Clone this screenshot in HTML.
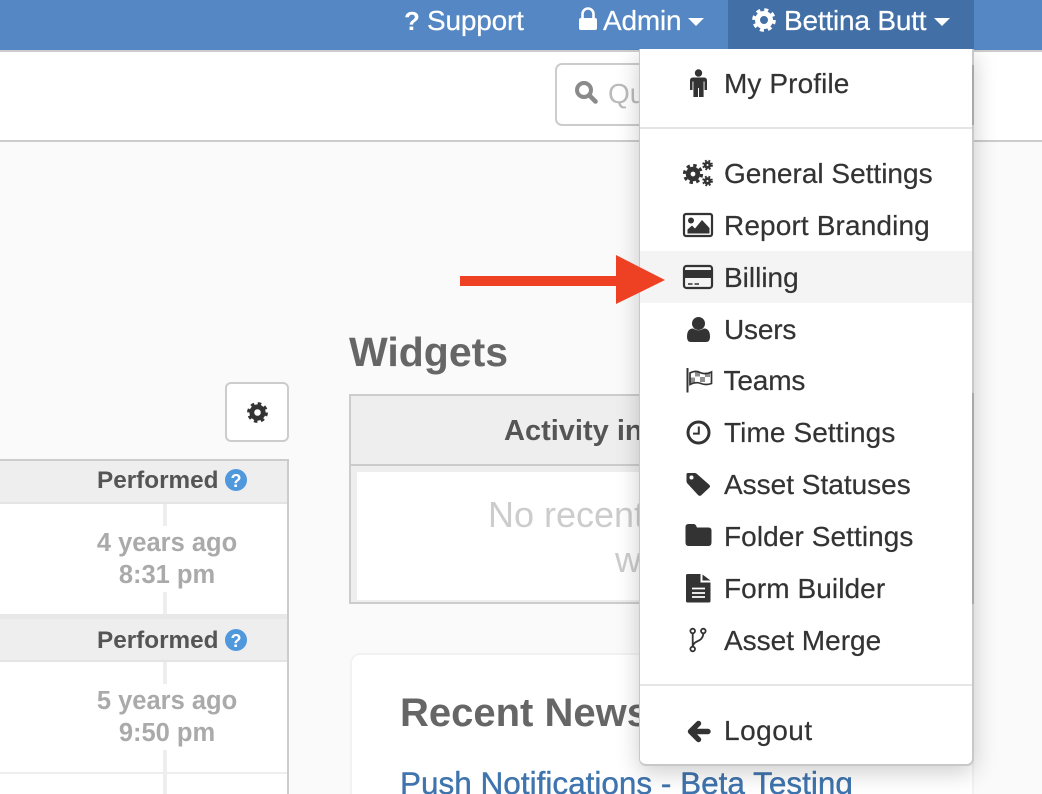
<!DOCTYPE html>
<html><head><meta charset="utf-8"><title>Billing</title>
<style>
html,body{margin:0;padding:0;width:1042px;height:794px;overflow:hidden;background:#fafafa;font-family:"Liberation Sans",sans-serif;}
#w{position:absolute;left:0;top:0;width:1042px;height:794px;overflow:hidden;background:#fafafa;}
.a{position:absolute;white-space:nowrap;}
.b{position:absolute;}
svg{position:absolute;overflow:visible;}
.m{position:absolute;left:724px;font-size:28px;line-height:32px;color:#333;white-space:nowrap;-webkit-text-stroke:.2px #333;}
.n{position:absolute;color:#fff;font-size:28px;line-height:32px;white-space:nowrap;letter-spacing:-.2px;-webkit-text-stroke:.2px #fff;}
.p{position:absolute;font-weight:bold;font-size:24.3px;line-height:30px;color:#555;white-space:nowrap;}
.t{position:absolute;width:200px;left:67px;text-align:center;font-weight:bold;font-size:25.5px;line-height:32px;color:#aaa;white-space:nowrap;}
</style></head><body><div id="w">
<div class="b" style="left:0;top:52px;width:1042px;height:88px;background:#fff"></div>
<div class="b" style="left:0;top:140px;width:1042px;height:2px;background:#ccc"></div>
<div class="b" style="left:0;top:0;width:1042px;height:50px;background:#5487c3"></div>
<div class="b" style="left:0;top:50px;width:1042px;height:2px;background:#ccc"></div>
<div class="b" style="left:728px;top:0;width:246px;height:50px;background:#4270a6"></div>

<span class="n" style="left:427px;top:5px">Support</span>
<span class="a" style="left:404px;top:5px;color:#fff;font-size:26px;font-weight:bold;line-height:32px">?</span>
<svg style="left:578px;top:8px" width="20" height="22" viewBox="0 0 20 22"><path d="M4.500 10V6a5.500 5.500 0 0 1 11 0v4" fill="none" stroke="#fff" stroke-width="2.600"/><rect x="1" y="10" width="18" height="12" rx="2" fill="#fff"/></svg>
<span class="n" style="left:603px;top:5px">Admin</span>
<svg style="left:688px;top:18px" width="16" height="9"><path d="M0 0H16L8 8Z" fill="#fff"/></svg>
<svg style="left:752px;top:8px" width="24" height="24" viewBox="0 0 24 24"><circle cx="12" cy="12" r="6.500" fill="none" stroke="#fff" stroke-width="5"/><circle cx="12" cy="12" r="10.200" fill="none" stroke="#fff" stroke-width="3.200" stroke-dasharray="4 4"/></svg>
<span class="n" style="left:784px;top:5px">Bettina Butt</span>
<svg style="left:934px;top:18px" width="16" height="9"><path d="M0 0H16L8 8Z" fill="#fff"/></svg>

<div class="b" style="left:555px;top:63px;width:415px;height:59px;background:#fff;border:2px solid #ccc;border-radius:7px"></div>
<svg style="left:574px;top:80px" width="24" height="24" viewBox="0 0 24 24"><circle cx="10" cy="10" r="7" fill="none" stroke="#8a8a8a" stroke-width="4"/><path d="M15.500 15.500L21.500 21.500" stroke="#8a8a8a" stroke-width="4.600" stroke-linecap="round"/></svg>
<span class="a" style="left:608px;top:78px;font-size:28px;line-height:32px;color:#bbb">Quick</span>

<div class="b" style="left:225px;top:382px;width:60px;height:56px;background:#fff;border:2px solid #ccc;border-radius:6px"></div>
<svg style="left:247px;top:402px" width="21" height="21" viewBox="0 0 24 24"><circle cx="12" cy="12" r="6.500" fill="none" stroke="#333" stroke-width="5.500"/><circle cx="12" cy="12" r="10.200" fill="none" stroke="#333" stroke-width="3.400" stroke-dasharray="4 4"/></svg>

<div class="b" style="left:-4px;top:459px;width:289px;height:340px;background:#fff;border:2px solid #ccc;border-bottom:0"></div>
<div class="b" style="left:0;top:461px;width:287px;height:41px;background:#eee"></div>
<div class="b" style="left:0;top:502px;width:287px;height:2px;background:#e4e4e4"></div>
<div class="b" style="left:163px;top:504px;width:4px;height:22px;background:#eee"></div>
<div class="b" style="left:163px;top:592px;width:4px;height:22px;background:#eee"></div>
<div class="b" style="left:0;top:614px;width:287px;height:5px;background:#e8e8e8"></div>
<div class="b" style="left:0;top:619px;width:287px;height:41px;background:#eee"></div>
<div class="b" style="left:0;top:660px;width:287px;height:2px;background:#e4e4e4"></div>
<div class="b" style="left:163px;top:662px;width:4px;height:22px;background:#eee"></div>
<div class="b" style="left:163px;top:750px;width:4px;height:44px;background:#eee"></div>
<div class="b" style="left:0;top:772px;width:287px;height:2px;background:#eee"></div>
<span class="p" style="left:97px;top:466px">Performed</span>
<span class="p" style="left:97px;top:626px">Performed</span>
<svg style="left:225px;top:469px" width="22" height="22"><circle cx="11" cy="11" r="11" fill="#4f98dc"/><text x="11" y="18" font-family="Liberation Sans" font-weight="bold" font-size="18" fill="#fff" text-anchor="middle">?</text></svg>
<svg style="left:225px;top:629px" width="22" height="22"><circle cx="11" cy="11" r="11" fill="#4f98dc"/><text x="11" y="18" font-family="Liberation Sans" font-weight="bold" font-size="18" fill="#fff" text-anchor="middle">?</text></svg>
<div class="t" style="top:527px">4 years ago</div>
<div class="t" style="top:559px">8:31 pm</div>
<div class="t" style="top:685px">5 years ago</div>
<div class="t" style="top:717px">9:50 pm</div>

<span class="a" style="left:349px;top:329px;font-size:41px;line-height:46px;font-weight:bold;color:#666">Widgets</span>
<div class="b" style="left:349px;top:394px;width:621px;height:206px;background:#eee;border:2px solid #ccc"></div>
<div class="b" style="left:351px;top:464px;width:621px;height:2px;background:#ccc"></div>
<div class="b" style="left:357px;top:472px;width:615px;height:128px;background:#fff"></div>
<span class="a" style="left:504px;top:415px;font-size:29px;line-height:32px;font-weight:bold;color:#555">Activity in</span>
<span class="a" style="left:488px;top:495px;font-size:36px;line-height:40px;color:#ccc">No recent</span>
<span class="a" style="left:615px;top:540px;font-size:36px;line-height:40px;color:#ccc">w</span>

<div class="b" style="left:350px;top:653px;width:620px;height:160px;background:#fff;border:2px solid #f2f2f2;border-radius:10px"></div>
<span class="a" style="left:400px;top:690px;font-size:40px;line-height:46px;font-weight:bold;color:#666">Recent News</span>
<span class="a" style="left:400px;top:767px;font-size:31.500px;line-height:32px;color:#3f74ad;-webkit-text-stroke:.4px #3f74ad">Push Notifications - Beta Testing</span>

<div class="b" style="left:639px;top:49px;width:332px;height:715px;background:#fff;border:1px solid #c8c8c8;border-right-width:2px;border-top:0;border-bottom-width:2px;border-radius:0 0 7px 7px;box-shadow:0 6px 24px rgba(0,0,0,.2);clip-path:inset(0 -40px -40px -40px)"></div>
<div class="b" style="left:972px;top:393px;width:2px;height:211px;background:#a8a8a8"></div>
<div class="b" style="left:972px;top:65px;width:2px;height:60px;background:#a8a8a8"></div>
<div class="b" style="left:640px;top:127px;width:332px;height:2px;background:#e5e5e5"></div>
<div class="b" style="left:640px;top:684px;width:332px;height:2px;background:#e5e5e5"></div>
<div class="b" style="left:640px;top:251px;width:332px;height:52px;background:#f4f4f4"></div>

<span class="m" style="top:68px;letter-spacing:.1px">My Profile</span>
<span class="m" style="top:158px">General Settings</span>
<span class="m" style="top:210px;letter-spacing:.13px">Report Branding</span>
<span class="m" style="top:262px">Billing</span>
<span class="m" style="top:314px;letter-spacing:-.2px">Users</span>
<span class="m" style="top:365px;left:723.500px;letter-spacing:-.15px">Teams</span>
<span class="m" style="top:417px;letter-spacing:.1px">Time Settings</span>
<span class="m" style="top:469px">Asset Statuses</span>
<span class="m" style="top:521px;letter-spacing:.08px">Folder Settings</span>
<span class="m" style="top:573px;letter-spacing:.08px">Form Builder</span>
<span class="m" style="top:625px">Asset Merge</span>
<span class="m" style="top:715px;letter-spacing:.5px">Logout</span>

<svg style="left:690px;top:69px" width="17" height="28" viewBox="0 0 17 28"><circle cx="8.500" cy="4" r="3.700" fill="#333"/><path d="M3 8.500H14Q17 8.500 17 11.500V21H14.500V12.500H13.600V28H9V19H8V28H3.400V12.500H2.500V21H0V11.500Q0 8.500 3 8.500Z" fill="#333"/></svg>

<svg style="left:683px;top:159px" width="30" height="28" viewBox="0 0 30 28"><g fill="none" stroke="#333"><circle cx="10" cy="15" r="4.800" stroke-width="4.800"/><circle cx="10" cy="15" r="8.600" stroke-width="3" stroke-dasharray="3.400 3.350"/><circle cx="24.500" cy="6" r="2.400" stroke-width="2.800"/><circle cx="24.500" cy="6" r="4.400" stroke-width="1.900" stroke-dasharray="1.800 1.800"/><circle cx="24.500" cy="22" r="2.400" stroke-width="2.800"/><circle cx="24.500" cy="22" r="4.400" stroke-width="1.900" stroke-dasharray="1.800 1.800"/></g></svg>

<svg style="left:683px;top:213px" width="30" height="24" viewBox="0 0 30 24"><rect x="1" y="1" width="28" height="22" rx="2" fill="none" stroke="#333" stroke-width="2.200"/><circle cx="8" cy="7.500" r="3" fill="#333"/><path d="M4.500 20.500V16.500L9 12.500L12 15.500L19 7L26.500 15V20.500Z" fill="#333"/></svg>

<svg style="left:683px;top:265px" width="30" height="24" viewBox="0 0 30 24"><rect x="1" y="1" width="28" height="22" rx="2.500" fill="none" stroke="#333" stroke-width="2.200"/><rect x="1" y="5" width="28" height="8" fill="#333"/><path d="M5 19H9.500M11.500 19H16" stroke="#333" stroke-width="1.600"/></svg>

<svg style="left:687px;top:317px" width="23" height="25" viewBox="0 0 23 25"><circle cx="11.500" cy="6.500" r="6.500" fill="#333"/><path d="M0 20Q0 11.500 6 11.500Q11.500 15 17 11.500Q23 11.500 23 20Q23 25 19 25H4Q0 25 0 20Z" fill="#333"/></svg>

<svg style="left:686px;top:368px" width="27" height="25" viewBox="0 0 27 25"><path d="M1.500 0V24.500" stroke="#333" stroke-width="2"/><path d="M4 5Q9 2 14 4.500T25.500 4V15.500Q20 17.500 15 15.500T4 16.500Z" fill="none" stroke="#333" stroke-width="1.700"/><path d="M9 4H14V8.500H9ZM19 4.500H24V9H19ZM14 9H19V14H14ZM4.500 9.500H9V15H4.500Z" fill="#333" opacity=".55"/></svg>

<svg style="left:686px;top:420px" width="25" height="25" viewBox="0 0 25 25"><circle cx="12.500" cy="12.500" r="10.500" fill="none" stroke="#333" stroke-width="3"/><path d="M12.800 6.500V13.600H7" fill="none" stroke="#333" stroke-width="2"/></svg>

<svg style="left:686px;top:472px" width="25" height="25" viewBox="0 0 25 25"><path d="M0.500 2.500Q0.500 1 2 1H9Q10 1 11 2L23.500 13Q24.500 14.500 23.500 15.500L15 23.500Q13.500 24.500 12 23L1 11Q0.500 10 0.500 9Z" fill="#333"/><circle cx="5.500" cy="5.500" r="2" fill="#fff"/></svg>

<svg style="left:685px;top:524px" width="27" height="22" viewBox="0 0 26 22"><path d="M0 3Q0 0 3 0H8Q10 0 11 2.500L11.500 3.500H23Q26 3.500 26 6.500V18.500Q26 22 23 22H3Q0 22 0 18.500Z" fill="#333"/></svg>

<svg style="left:686px;top:574px" width="25" height="29" viewBox="0 0 25 29"><path d="M1.500 0H14.500V8.500H24.500V27Q24.500 28.500 23 28.500H1.500Q0 28.500 0 27V1.500Q0 0 1.500 0Z" fill="#333"/><path d="M16.500 0.500L24.500 6.500H16.500Z" fill="#333"/><path d="M6 14.500H19M6 19H19M6 23H19" stroke="#fff" stroke-width="1.800"/></svg>

<svg style="left:689px;top:628px" width="20" height="26" viewBox="0 0 20 26"><g fill="none" stroke="#333" stroke-width="1.800"><circle cx="3.700" cy="3" r="2.300"/><circle cx="3.700" cy="21" r="2.300"/><circle cx="14.300" cy="3" r="2.300"/><path d="M3.700 5.300V18.700M14.300 5.300Q14.300 11 8 13.500Q4.200 15 3.700 18.700"/></g></svg>

<svg style="left:687px;top:719px" width="24" height="25" viewBox="0 0 24 25"><path d="M11.500 4.500L3.500 12.500L11.500 20.500M4 12.500H21" fill="none" stroke="#333" stroke-width="5.400" stroke-linejoin="round" stroke-linecap="round"/></svg>

<div class="b" style="left:460px;top:276px;width:160px;height:10px;background:#ee4023"></div>
<svg style="left:616px;top:255px" width="49" height="49"><path d="M0 0L49 25L0 49Z" fill="#ee4023"/></svg>
</div></body></html>
